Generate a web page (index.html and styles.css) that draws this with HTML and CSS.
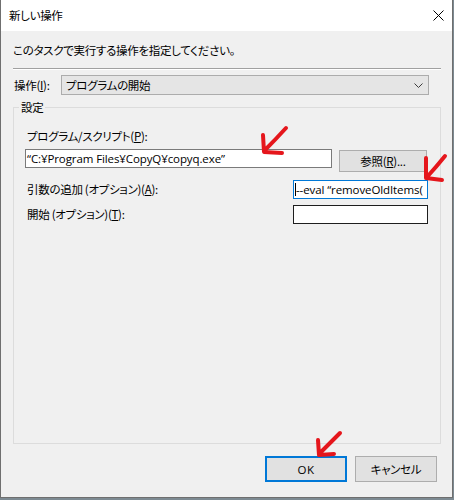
FILE: index.html
```html
<!doctype html>
<html lang=ja>
	<head>
		<meta charset=utf-8>
		<title>新しい操作</title>

		<link rel="stylesheet" href="styles.css">
	</head>
	<body>
		<div class="dialog">
			<div class="titlebar">
				<span>新しい操作</span>
				<svg class="close" width="11" height="11" viewBox="0 0 11 11">
					<path d="M0.5 0.5 L10.5 10.5 M10.5 0.5 L0.5 10.5" stroke="#000" stroke-width="1" fill="none"/>
				</svg>
			</div>

			<div class="content">
				<div class="intro">このタスクで実行する操作を指定してください。</div>
				<div class="rule"></div>

				<div class="action">
					<label class="action-label">操作(<u>I</u>):</label>
					<div class="combo">
						<span>プログラムの開始</span>
						<svg width="9" height="5" viewBox="0 0 9 5">
							<path d="M0.5 0.5 L4.5 4.5 L8.5 0.5" stroke="#3c3c3c" stroke-width="1" fill="none"/>
						</svg>
					</div>
				</div>

				<fieldset class="group">
					<legend>設定</legend>
					<div class="inner">
						<div class="label">プログラム/スクリプト(<u>P</u>):</div>
						<div class="row-program">
							<div class="field wide">“C:¥Program Files¥CopyQ¥copyq.exe”</div>
							<div class="button browse">参照(<u>R</u>)...</div>
						</div>

						<div class="row">
							<div class="label">引数の追加 (オプション)(<u>A</u>):</div>
							<div class="field short focused"><span class="caret"></span>--eval “removeOldItems(</div>
						</div>

						<div class="row row-start">
							<div class="label">開始 (オプション)(<u>T</u>):</div>
							<div class="field short hover"></div>
						</div>
					</div>
				</fieldset>

				<div class="footer">
					<div class="button default latin">OK</div>
					<div class="button">キャンセル</div>
				</div>
			</div>

			<!-- hand-drawn markers over the form -->
			<svg class="marks" width="454" height="500" viewBox="0 0 454 500">
				<g stroke="#e5161c" stroke-width="4" stroke-linecap="round" stroke-linejoin="round" fill="none">
					<path d="M285 128 Q275 139 263 151 M262 135 L263 152 L281 153"/>
					<path d="M444 156 Q436 166 426 177 M425 158 L425 178 L441 180"/>
					<path d="M339 433 Q329 443 319 453 M317 440 L318 455 L333 454"/>
				</g>
			</svg>
		</div>
	</body>
</html>
```

FILE: styles.css
```css
body
{
	margin: 0px;
	padding: 0px;
	background-color: #7d8a92;
	color: #000000;
	font-family: "Noto Sans CJK JP", sans-serif;
	font-size: 11.5px;
	letter-spacing: -0.3px;
	font-feature-settings: "palt";
}

.dialog
{
	position: relative;
	box-sizing: border-box;
	width: 453px;
	height: 498px;
	display: flex;
	flex-direction: column;
	background-color: #f0f0f0;
	border: 1px solid #6f6f6f;
	border-top: none;
}

.titlebar
{
	height: 31px;
	flex-shrink: 0;
	display: flex;
	align-items: center;
	justify-content: space-between;
	padding: 0px 8px 0px 8px;
	background-color: #ffffff;
	line-height: 15px;
}

.content
{
	flex: 1;
	display: flex;
	flex-direction: column;
	padding: 0px 11px 0px 12px;
}

.intro
{
	margin-top: 12px;
	line-height: 15px;
}

.rule
{
	margin-top: 10px;
	border-top: 1px solid #a0a0a0;
	border-bottom: 1px solid #ffffff;
}

.action
{
	margin-top: 5px;
	display: flex;
	align-items: center;
	height: 20px;
}

.action-label
{
	width: 47px;
	padding-left: 1px;
	line-height: 15px;
}

.combo
{
	box-sizing: border-box;
	width: 368px;
	height: 20px;
	display: flex;
	align-items: center;
	justify-content: space-between;
	padding: 0px 5px 0px 4px;
	background-color: #e5e5e5;
	border: 1px solid #acacac;
	line-height: 15px;
}

.group
{
	flex: 1;
	min-width: 0px;
	margin: 5px 0px 0px 0px;
	padding: 0px;
	border: 1px solid #dcdcdc;
}

.group legend
{
	margin-left: 5px;
	padding: 0px 2px;
	line-height: 15px;
}

.inner
{
	padding: 14px 12px 0px 11px;
}

.label
{
	padding-left: 2px;
	line-height: 15px;
}

.row-program
{
	margin-top: 5px;
	display: flex;
	align-items: flex-start;
	gap: 7px;
}

.row
{
	display: flex;
	align-items: center;
	justify-content: space-between;
	margin-top: 8px;
}

.row-start
{
	margin-top: 6px;
}

/* text boxes use a latin face for the path and arguments */
.field
{
	box-sizing: border-box;
	height: 19px;
	padding-left: 1px;
	background-color: #ffffff;
	border: 1px solid #7a7a7a;
	font-family: "Open Sans", "Noto Sans CJK JP", sans-serif;
	font-size: 11.5px;
	letter-spacing: -0.1px;
	line-height: 17px;
	white-space: nowrap;
	overflow: hidden;
}

.field.wide
{
	width: 307px;
}

.field.short
{
	width: 135px;
}

.field.focused
{
	border-color: #0078d7;
}

.field.hover
{
	border-color: #1e1e1e;
}

.caret
{
	display: inline-block;
	width: 1px;
	height: 13px;
	vertical-align: -2px;
	background-color: #000000;
}

.button
{
	box-sizing: border-box;
	width: 82px;
	height: 26px;
	display: flex;
	align-items: center;
	justify-content: center;
	background-color: #e1e1e1;
	border: 1px solid #adadad;
	line-height: 15px;
}

.button.browse
{
	width: 88px;
	height: 22px;
	margin-top: 1px;
}

.button.default
{
	border: 2px solid #0078d7;
}

.latin
{
	font-family: "Open Sans", sans-serif;
	font-size: 11.5px;
	letter-spacing: 0.5px;
}

.footer
{
	display: flex;
	justify-content: flex-end;
	gap: 8px;
	padding: 12px 4px 15px 0px;
}

.marks
{
	position: absolute;
	top: 0px;
	left: 0px;
	pointer-events: none;
}
```
